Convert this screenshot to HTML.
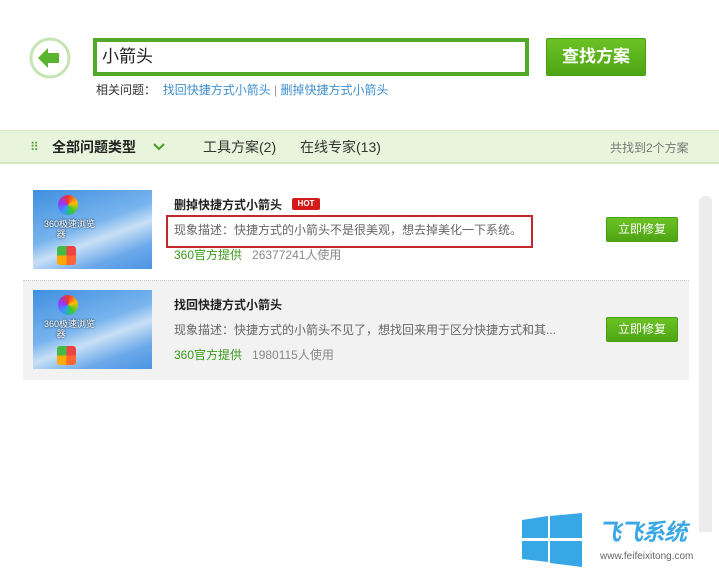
<!DOCTYPE html>
<html><head><meta charset="utf-8"><style>
*{margin:0;padding:0;box-sizing:border-box}
body{width:719px;height:569px;background:#fff;position:relative;overflow:hidden;font-family:"Liberation Sans","Noto Sans CJK SC",sans-serif;font-size:12px;color:#333}
.a{position:absolute}
.btn{background:linear-gradient(#6cc224,#4ea514);color:#fff;border:1px solid #47a012;border-radius:2px;text-align:center}
.thumb{background:linear-gradient(160deg,#3f8fe0 0%,#78b4ee 45%,#c8e0f6 60%,#6aa8ea 80%,#4c94e2 100%)}
</style></head><body>
<svg class="a" style="left:28px;top:37px" width="44" height="44"><circle cx="22" cy="21" r="19" fill="#fff" stroke="#c6e4b4" stroke-width="3"/><path d="M10 21 L20 11 L20 16 L31 16 L31 26 L20 26 L20 31 Z" fill="#5ab42d"/></svg>
<div class="a" style="left:93px;top:38px;width:436px;height:38px;border:4px solid #52a82b;background:#fff;font-size:17px;line-height:30px;padding-left:5px;color:#222">小箭头</div>
<div class="a btn" style="left:546px;top:38px;width:100px;height:38px;font-size:17px;line-height:36px;font-weight:bold">查找方案</div>
<div class="a" style="left:96px;top:82px;font-size:12px;line-height:16px"><b style="font-weight:normal;color:#333">相关问题：</b>&nbsp; <span style="color:#3d8fcf">找回快捷方式小箭头</span> <span style="color:#999">|</span> <span style="color:#3d8fcf">删掉快捷方式小箭头</span></div>
<div class="a" style="left:0;top:130px;width:719px;height:34px;background:#e8f5dc;border-top:1px solid #d2e8c0;border-bottom:2px solid #d6e8c8"></div>
<div class="a" style="left:30px;top:140px;color:#4a9e24;font-size:12px;line-height:14px">⠿</div>
<div class="a" style="left:52px;top:138px;font-size:14px;font-weight:bold;line-height:18px;color:#222">全部问题类型</div>
<svg class="a" style="left:153px;top:142px" width="12" height="10"><path d="M1 2 L6 7 L11 2" stroke="#4a9e24" stroke-width="2" fill="none"/></svg>
<div class="a" style="left:203px;top:138px;font-size:14px;line-height:18px">工具方案(2)</div>
<div class="a" style="left:300px;top:138px;font-size:14px;line-height:18px">在线专家(13)</div>
<div class="a" style="left:610px;top:141px;font-size:12px;line-height:14px;color:#777">共找到2个方案</div>

<div class="a" style="left:23px;top:280px;width:666px;height:100px;background:#f2f2f2;border-top:1px dotted #ccc"></div>
<div class="a thumb" style="left:33px;top:190px;width:119px;height:79px"></div>
<div class="a thumb" style="left:33px;top:290px;width:119px;height:79px"></div>
<div class="a" style="left:58px;top:195px;width:20px;height:20px;border-radius:50%;background:conic-gradient(#e33,#fb0,#3c3,#39f,#93f,#e33)"></div>
<div class="a" style="left:58px;top:295px;width:20px;height:20px;border-radius:50%;background:conic-gradient(#e33,#fb0,#3c3,#39f,#93f,#e33)"></div>
<div class="a" style="left:57px;top:246px;width:19px;height:19px;border-radius:3px;background:conic-gradient(#e44 0 25%,#f63 0 50%,#fa0 0 75%,#4b4 0)"></div>
<div class="a" style="left:57px;top:346px;width:19px;height:19px;border-radius:3px;background:conic-gradient(#e44 0 25%,#f63 0 50%,#fa0 0 75%,#4b4 0)"></div>
<div class="a" style="left:44px;top:219px;font-size:9px;color:#fff;line-height:10px;text-shadow:0 0 2px #000">360极速浏览<br>&nbsp;&nbsp;&nbsp;&nbsp;&nbsp;器</div>
<div class="a" style="left:44px;top:319px;font-size:9px;color:#fff;line-height:10px;text-shadow:0 0 2px #000">360极速浏览<br>&nbsp;&nbsp;&nbsp;&nbsp;&nbsp;器</div>

<div class="a" style="left:174px;top:197px;font-size:12px;font-weight:bold;line-height:16px;color:#222">删掉快捷方式小箭头</div>
<div class="a" style="left:292px;top:198px;width:28px;height:12px;background:#d31b1b;border-radius:2px;color:#fff;font-size:8px;font-weight:bold;line-height:12px;text-align:center">HOT</div>
<div class="a" style="left:166px;top:215px;width:367px;height:33px;border:2px solid #c4282d"></div>
<div class="a" style="left:174px;top:222px;font-size:12px;line-height:16px;color:#666">现象描述：快捷方式的小箭头不是很美观，想去掉美化一下系统。</div>
<div class="a" style="left:174px;top:247px;font-size:12px;line-height:16px;color:#888"><span style="color:#3a9a1c">360官方提供</span>&nbsp;&nbsp; 26377241人使用</div>
<div class="a btn" style="left:606px;top:217px;width:72px;height:25px;font-size:12px;line-height:23px">立即修复</div>

<div class="a" style="left:174px;top:297px;font-size:12px;font-weight:bold;line-height:16px;color:#222">找回快捷方式小箭头</div>
<div class="a" style="left:174px;top:322px;font-size:12px;line-height:16px;color:#666">现象描述：快捷方式的小箭头不见了，想找回来用于区分快捷方式和其...</div>
<div class="a" style="left:174px;top:347px;font-size:12px;line-height:16px;color:#888"><span style="color:#3a9a1c">360官方提供</span>&nbsp;&nbsp; 1980115人使用</div>
<div class="a btn" style="left:606px;top:317px;width:72px;height:25px;font-size:12px;line-height:23px">立即修复</div>

<div class="a" style="left:699px;top:196px;width:13px;height:336px;background:#ececec;border-radius:6px 6px 0 0"></div>

<svg class="a" style="left:522px;top:513px" width="60" height="54"><path d="M0 7 L26 3 L26 25 L0 25Z M28 3 L60 0 L60 25 L28 25Z M0 28 L26 28 L26 49 L0 46Z M28 28 L60 28 L60 54 L28 50Z" fill="#37a7e6"/></svg>
<div class="a" style="left:598px;top:518px;font-size:23px;font-weight:bold;font-style:italic;color:#3aa7e6;line-height:28px;letter-spacing:-1px">飞飞系统</div>
<div class="a" style="left:600px;top:551px;font-size:10px;color:#666;line-height:12px">www.feifeixitong.com</div>
</body></html>
